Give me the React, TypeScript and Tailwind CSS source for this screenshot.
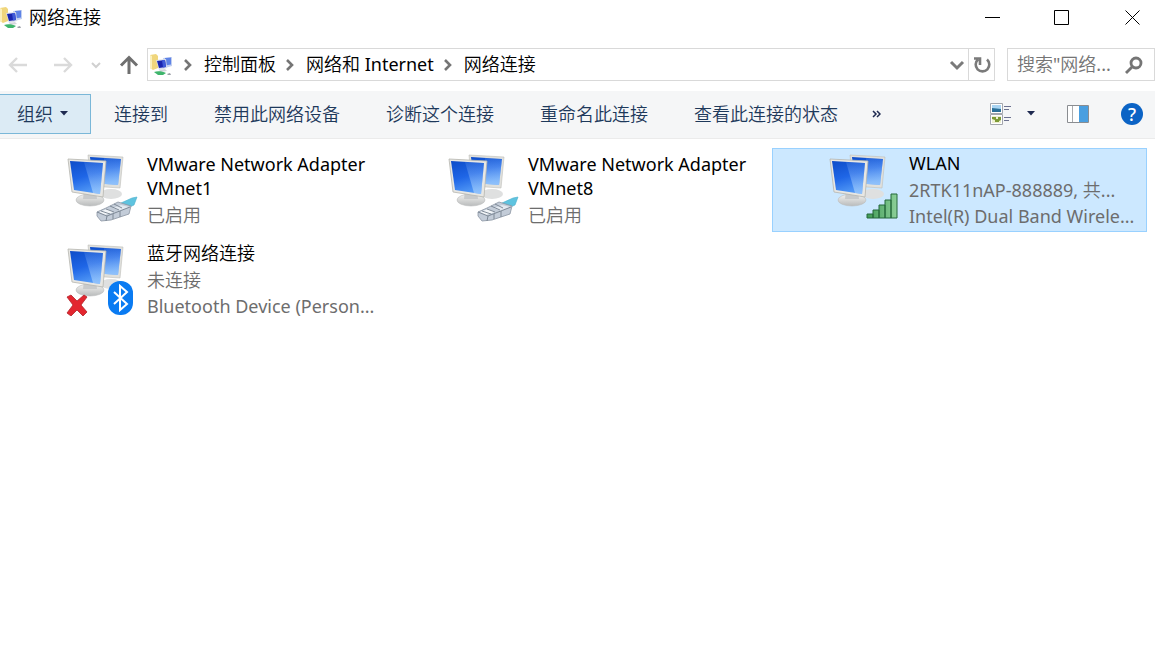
import React from 'react';

type Badge = 'cable' | 'signal' | 'bluetooth';

interface Connection {
  name: string;
  details: string[];
  badge: Badge;
  selected?: boolean;
  disconnected?: boolean;
}

const connections: Connection[] = [
  { name: 'VMware Network Adapter VMnet1', details: ['已启用'], badge: 'cable' },
  { name: 'VMware Network Adapter VMnet8', details: ['已启用'], badge: 'cable' },
  {
    name: 'WLAN',
    details: ['2RTK11nAP-888889, 共...', 'Intel(R) Dual Band Wirele...'],
    badge: 'signal',
    selected: true,
  },
  {
    name: '蓝牙网络连接',
    details: ['未连接', 'Bluetooth Device (Person...'],
    badge: 'bluetooth',
    disconnected: true,
  },
];

const commands = ['连接到', '禁用此网络设备', '诊断这个连接', '重命名此连接', '查看此连接的状态'];

const crumbs = ['控制面板', '网络和 Internet', '网络连接'];

function FolderIcon() {
  return (
    <svg width="24" height="24" viewBox="0 0 24 24" aria-hidden="true">
      <path d="M0 2l6-1 2 2v12l-5 2-3-2z" fill="#f0d67c" />
      <path d="M0 2l2 1v13l-2-1z" fill="#fbf0bd" />
      <path d="M13 5l9-1v9l-7 2z" fill="#c3d0f0" />
      <path d="M15 5l6-.5v7l-6 1z" fill="#5e83e6" />
      <path d="M6 7l10-1 1 9-8 2z" fill="#d6dcea" />
      <path d="M7 8l8-1 1 7-7 1z" fill="#1a26b0" />
      <path d="M12 7l3 0 1 7-3 .5z" fill="#3f5ad8" />
      <path d="M9 17l6-1 2 2-6 1z" fill="#d3d6dc" />
      <path d="M4 19c3-1 8-1 12 1l-3 2H8z" fill="#3fb56c" />
      <path d="M17 21l3-1 1 2h-3z" fill="#9a9fa6" />
    </svg>
  );
}

function CrumbArrow() {
  return (
    <svg width="10" height="12" viewBox="0 0 10 12" fill="none" aria-hidden="true">
      <path d="M1 1l5 5-5 5" stroke="#757575" strokeWidth="2.6" />
    </svg>
  );
}

function CaretDown() {
  return (
    <svg width="8" height="5" viewBox="0 0 8 5" aria-hidden="true">
      <path d="M0 0h8L4 4.5z" fill="#1e2a50" />
    </svg>
  );
}

function ConnectionIcon({ badge, disconnected }: { badge: Badge; disconnected?: boolean }) {
  return (
    <svg width="72" height="72" viewBox="0 2 72 72" aria-hidden="true">
      <defs>
        <linearGradient id="screen" x1="0" y1="0" x2="0.3" y2="1">
          <stop offset="0" stopColor="#0d4cc9" />
          <stop offset="0.55" stopColor="#1f66e6" />
          <stop offset="1" stopColor="#4f96f5" />
        </linearGradient>
        <linearGradient id="glare" x1="0" y1="0" x2="0" y2="1">
          <stop offset="0" stopColor="#8fbcfa" stopOpacity="0.15" />
          <stop offset="1" stopColor="#b4daff" stopOpacity="0.65" />
        </linearGradient>
        <linearGradient id="stand" x1="0" y1="0" x2="0" y2="1">
          <stop offset="0" stopColor="#f4f4f2" />
          <stop offset="1" stopColor="#b9bbbc" />
        </linearGradient>
        <linearGradient id="bars" x1="0" y1="0" x2="1" y2="0">
          <stop offset="0" stopColor="#3f9a55" />
          <stop offset="1" stopColor="#8ccf98" />
        </linearGradient>
      </defs>
      <ellipse cx="45" cy="42" rx="11" ry="5" fill="#dfe0e0" />
      <path d="M22 3l35 2-3 31-29-2z" fill="#e0e0dc" stroke="#bdbdb8" strokeWidth="0.6" />
      <path d="M24 5l31 2-3 26-25-2z" fill="url(#screen)" />
      <path d="M38 6l17 1-3 26-14-1z" fill="url(#glare)" />
      <ellipse cx="24" cy="48" rx="14" ry="6" fill="url(#stand)" stroke="#bcbdbd" strokeWidth="0.6" />
      <path d="M18 38h12l1 9H17z" fill="#c8cacb" />
      <path d="M2 7l38 2-3 36-31-5z" fill="#e8e7e3" stroke="#b5b5af" strokeWidth="0.8" />
      <path d="M4 9l33 2-3 31-26-4z" fill="url(#screen)" />
      <path d="M18 10l19 1-3 31-7-1z" fill="url(#glare)" />
      {badge === 'cable' && (
        <g>
          <path d="M55 51l11-5 5-1-3 8-9 4z" fill="#5fc3df" stroke="#4aaecb" strokeWidth="0.6" />
          <path d="M31 60l9-4 12-6 13 4-2 8-18 6-10 1-4-5z" fill="#c3ccd8" stroke="#8a94a2" strokeWidth="0.8" />
          <path d="M33 60l8-3 7 3-9 3z" fill="#f2f5f8" />
          <path d="M47 56l8-3 8 2-9 4z" fill="#e3e9f0" />
          <path
            d="M31 60l10 4 23-9M41 64l-1 5M35 59l9 3M40 57l8 3M44 54l9 4M48 52l8 4M47 62v5M54 59v6"
            fill="none"
            stroke="#76818f"
            strokeWidth="0.9"
          />
        </g>
      )}
      {badge === 'signal' && (
        <g fill="url(#bars)" stroke="#25683a" strokeWidth="1">
          <path d="M39 62h6v4h-6zM45 58h6v8h-6zM51 53h6v13h-6zM57 48h6v18h-6zM63 42h6v24h-6z" />
        </g>
      )}
      {badge === 'bluetooth' && (
        <g>
          <rect x="42" y="39" width="25" height="34" rx="12" fill="#0a7bf2" />
          <path d="M48 50l13 12-7 6V44l7 6-13 12" fill="none" stroke="#fff" strokeWidth="2" />
        </g>
      )}
      {disconnected && (
        <path
          d="M1 55l4-2 6 6 7-6 3 2-6 8 6 7-4 4-6-6-6 6-4-3 6-8z"
          fill="#e3262f"
          stroke="#b2222a"
          strokeWidth="0.8"
        />
      )}
    </svg>
  );
}

function TitleBar() {
  return (
    <header className="flex h-9 items-center">
      <FolderIcon />
      <h1 className="ml-[5px] flex-1 pb-[2px]">网络连接</h1>
      <button aria-label="最小化" className="flex h-9 w-[70px] items-center justify-center">
        <svg width="16" height="16" viewBox="0 0 16 16" stroke="#000" fill="none">
          <path d="M1 7.5h15" />
        </svg>
      </button>
      <button aria-label="最大化" className="flex h-9 w-[70px] items-center justify-center">
        <svg width="16" height="16" viewBox="0 0 16 16" stroke="#000" fill="none">
          <path d="M.5.5h14v14H.5z" />
        </svg>
      </button>
      <button aria-label="关闭" className="flex h-9 w-[58px] items-center pl-7">
        <svg width="16" height="16" viewBox="0 0 16 16" stroke="#000" fill="none">
          <path d="M.5.5l14 14M14.5.5l-14 14" />
        </svg>
      </button>
    </header>
  );
}

function AddressRow() {
  return (
    <nav className="flex h-[55px] items-center pt-[2px]">
      <div className="flex w-[147px] items-center pl-[7px]">
        <button aria-label="后退" className="mr-[26px]">
          <svg width="20" height="18" viewBox="0 0 20 18" fill="none" stroke="#dadada" strokeWidth="2.4">
            <path d="M20 9H3M10 2L3 9l7 7" />
          </svg>
        </button>
        <button aria-label="前进" className="mr-[18px]">
          <svg width="20" height="18" viewBox="0 0 20 18" fill="none" stroke="#dadada" strokeWidth="2.4">
            <path d="M1 9h17M11 2l7 7-7 7" />
          </svg>
        </button>
        <button aria-label="最近浏览的位置" className="mr-[18px]">
          <svg width="10" height="8" viewBox="0 0 10 8" fill="none" stroke="#d0d0d0" strokeWidth="2">
            <path d="M1 2l4 4 4-4" />
          </svg>
        </button>
        <button aria-label="向上">
          <svg width="20" height="20" viewBox="0 0 20 20" fill="none" stroke="#6f6f6f" strokeWidth="3">
            <path d="M10 19V3M2 10.5L10 2.500l8 8" />
          </svg>
        </button>
      </div>
      <div className="mr-3 flex h-[33px] flex-1 items-center border border-[#d9d9d9] pl-[2px]">
        <FolderIcon />
        {crumbs.map((crumb) => (
          <React.Fragment key={crumb}>
            <span className="mx-2 w-[14px] pl-[2px]">
              <CrumbArrow />
            </span>
            <a href="#" className="pb-[2px] whitespace-nowrap">
              {crumb}
            </a>
          </React.Fragment>
        ))}
        <button aria-label="以前的位置" className="ml-auto mr-[3px]">
          <svg width="16" height="12" viewBox="0 0 16 12" fill="none" stroke="#7a7a7a" strokeWidth="3">
            <path d="M2 3l6 6 6-6" />
          </svg>
        </button>
        <button aria-label="刷新" className="flex h-full w-[26px] items-center justify-center border-l border-[#d9d9d9]">
          <svg width="18" height="18" viewBox="0 0 18 18" fill="none" stroke="#7a7a7a" strokeWidth="2.6">
            <path d="M14 3.5a6.800 6.800 0 1 1-9 0M1 2.500h6v6.500" />
          </svg>
        </button>
      </div>
      <label className="flex h-[33px] w-[148px] items-center border border-[#d9d9d9] pl-[9px]">
        <input
          type="text"
          aria-label="搜索网络连接"
          placeholder={'搜索"网络...'}
          className="w-[108px] bg-transparent pb-[2px] outline-none placeholder:text-[#757575]"
        />
        <svg width="18" height="18" viewBox="0 0 18 18" fill="none" stroke="#757575" strokeWidth="2.8">
          <circle cx="11" cy="7" r="5" />
          <path d="M8 10l-7 7" />
        </svg>
      </label>
    </nav>
  );
}

function Toolbar() {
  return (
    <div className="flex h-12 items-center border-b border-[#ebebeb] bg-[#f5f6f7] pb-[2px] text-[#1e395b]">
      <button className="flex h-10 w-[91px] items-center border border-l-0 border-[#7ab7d8] bg-[#dcebf5] pl-[17px]">
        <span className="mr-[7px]">组织</span>
        <CaretDown />
      </button>
      {commands.map((command) => (
        <button key={command} className="h-10 px-[23px] whitespace-nowrap">
          {command}
        </button>
      ))}
      <button aria-label="更多" className="ml-[11px]">
        <svg width="9" height="8" viewBox="0 0 9 8" fill="none" stroke="#1e2a50" strokeWidth="1.5">
          <path d="M1 1l3 3-3 3M5 1l3 3-3 3" />
        </svg>
      </button>
      <div className="ml-auto flex items-center pr-3">
        <button aria-label="更改视图" className="mr-[15px]">
          <svg width="22" height="24" viewBox="0 0 22 24" fill="none">
            <path d="M.5 1.500h12v10H.5zM.5 12.500h12v10H.5z" fill="#fff" stroke="#a3a6ad" />
            <path d="M2 3h9v7H2z" fill="#a9d4f2" />
            <path d="M2 6l9 1v3H2z" fill="#2b7098" />
            <path d="M2 14h9v7H2z" fill="#eef0d0" />
            <path d="M2 15h4v2h2v-2h3v3l-2 1v1H5v-2l-3-1z" fill="#7d9a35" />
            <path d="M14 4.500h7M14 7.500h5M14 15.500h7M14 18.500h5" stroke="#6d7290" />
          </svg>
        </button>
        <button aria-label="视图选项" className="mr-8">
          <CaretDown />
        </button>
        <button aria-label="显示预览窗格" className="mr-8">
          <svg width="22" height="18" viewBox="0 0 22 18">
            <path d="M.5.5h21v17H.5z" fill="#fff" stroke="#8a8d91" />
            <path d="M5.500 1v16" stroke="#a9acb0" />
            <path d="M12 1h9v16h-9z" fill="#4a9fe0" />
          </svg>
        </button>
        <button
          aria-label="获取帮助"
          className="flex size-[22px] items-center justify-center rounded-full bg-[#0b63c5] font-medium text-white"
        >
          ?
        </button>
      </div>
    </div>
  );
}

function ConnectionTile({ name, details, badge, selected, disconnected }: Connection) {
  return (
    <li
      className={`flex h-[84px] items-center border pl-[55px] pr-[7px] ${
        selected ? 'border-[#99d1ff] bg-[#cce8ff]' : 'border-transparent'
      }`}
    >
      <ConnectionIcon badge={badge} disconnected={disconnected} />
      <div className="ml-[9px] min-w-0 flex-1">
        <p className="mb-[2px]">{name}</p>
        {details.map((line) => (
          <p key={line} className="leading-[26px] whitespace-nowrap text-[#6d6d6d]">
            {line}
          </p>
        ))}
      </div>
    </li>
  );
}

export default function App() {
  return (
    <div className="min-h-screen bg-white font-['Noto_Sans','Noto_Sans_CJK_SC_DemiLight','Noto_Sans_CJK_SC',sans-serif] text-[18px] leading-6 text-black">
      <TitleBar />
      <AddressRow />
      <Toolbar />
      <main className="pt-[9px] pl-[10px]">
        <ul className="grid grid-cols-[repeat(auto-fill,375px)] gap-[6px]">
          {connections.map((connection) => (
            <ConnectionTile key={connection.name} {...connection} />
          ))}
        </ul>
      </main>
    </div>
  );
}
